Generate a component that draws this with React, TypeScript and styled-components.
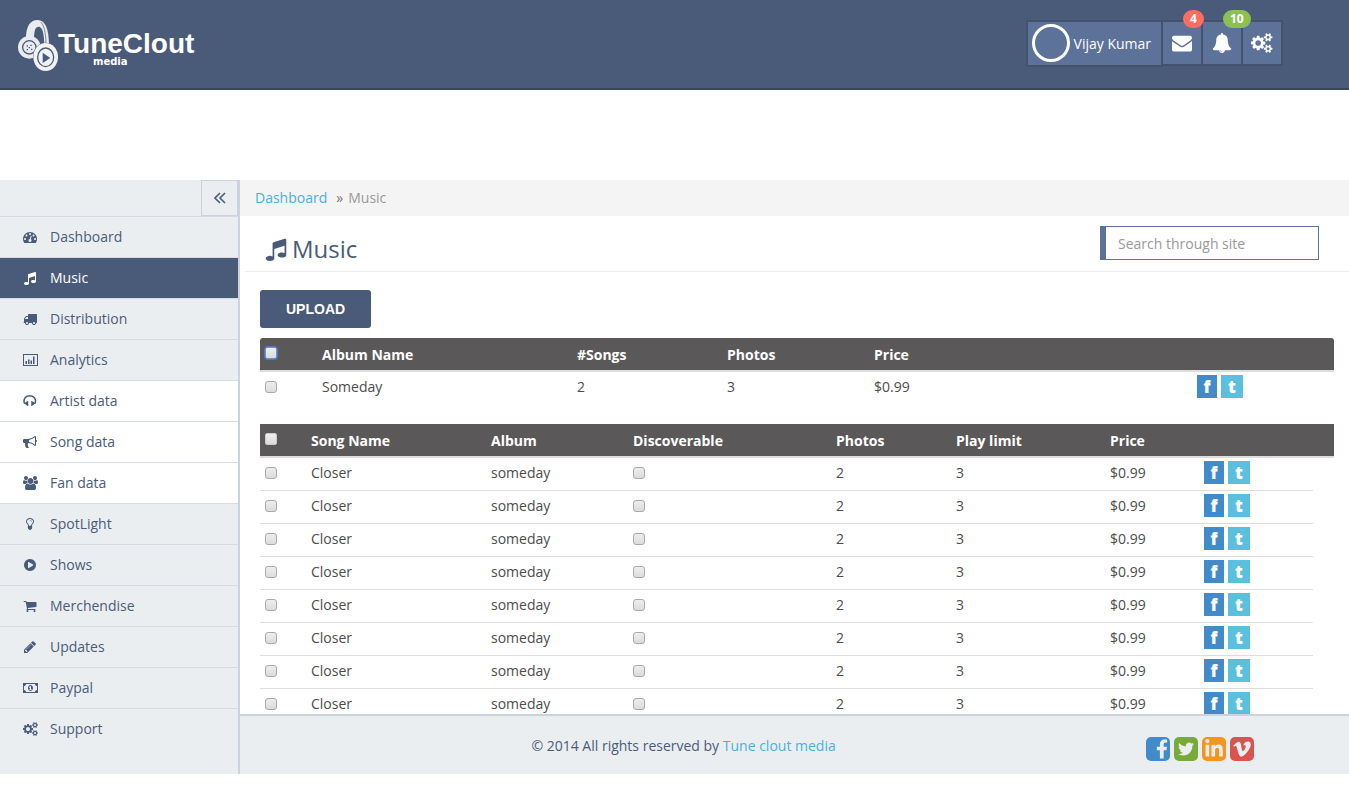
import React from "react";
import styled, { createGlobalStyle, css } from "styled-components";
import { FaFacebookF, FaTwitter, FaLinkedinIn, FaVimeoV } from "react-icons/fa";

const color = {
  navy: "#4a5b79",
  navyDark: "#39465c",
  tile: "#5c7299",
  tileEdge: "#43536e",
  panel: "#ebeef1",
  rule: "#d5dce4",
  edge: "#cbd4de",
  link: "#49b1dc",
  tableHead: "#5b5859",
};

const GlobalStyle = createGlobalStyle`
  *, *::before, *::after { box-sizing: border-box; }
  body {
    margin: 0;
    background: #fff;
    color: #4c4c4c;
    font: 14px/20px "Open Sans", "Noto Sans", sans-serif;
  }
  a { color: inherit; text-decoration: none; }
`;

/* ---------- icons ---------- */

const paths = {
  dashboard:
    "M384 1152q0-53-37.5-90.5t-90.5-37.5-90.5 37.5-37.5 90.5 37.5 90.5 90.5 37.5 90.5-37.5 37.5-90.5zm192-448q0-53-37.5-90.5t-90.5-37.5-90.5 37.5-37.5 90.5 37.5 90.5 90.5 37.5 90.5-37.5 37.5-90.5zm428 481l101-382q6-26-7.5-48.5t-38.5-29.5-48 6.5-30 39.5l-101 382q-60 5-107 43.5t-63 98.5q-20 77 20 146t117 89 146-20 89-117q16-60-6-117t-72-91zm660-33q0-53-37.5-90.5t-90.5-37.5-90.5 37.5-37.5 90.5 37.5 90.5 90.5 37.5 90.5-37.5 37.5-90.5zm-640-640q0-53-37.5-90.5t-90.5-37.5-90.5 37.5-37.5 90.5 37.5 90.5 90.5 37.5 90.5-37.5 37.5-90.5zm448 192q0-53-37.5-90.5t-90.5-37.5-90.5 37.5-37.5 90.5 37.5 90.5 90.5 37.5 90.5-37.5 37.5-90.5zm320 448q0 261-141 483-19 29-54 29h-1402q-35 0-54-29-141-221-141-483 0-182 71-348t191-286 286-191 348-71 348 71 286 191 191 286 71 348z",
  music:
    "M1664 224v1120q0 50-34 89t-86 60.5-103.5 32-96.5 10.5-96.5-10.5-103.5-32-86-60.5-34-89 34-89 86-60.5 103.5-32 96.5-10.5q105 0 192 39v-537l-768 237v709q0 50-34 89t-86 60.5-103.5 32-96.5 10.5-96.5-10.5-103.5-32-86-60.5-34-89 34-89 86-60.5 103.5-32 96.5-10.5q105 0 192 39v-967q0-31 19-56.5t49-35.5l832-256q12-4 28-4 40 0 68 28t28 68z",
  truck:
    "M640 1408q0-52-38-90t-90-38-90 38-38 90 38 90 90 38 90-38 38-90zm-384-512h384v-256h-158q-13 0-22 9l-195 195q-9 9-9 22v30zm1280 512q0-52-38-90t-90-38-90 38-38 90 38 90 90 38 90-38 38-90zm256-1088v1024q0 15-4 26.5t-13.5 18.5-16.5 11.5-23.5 6-22.5 2-25.5 0-22.5-.5q0 106-75 181t-181 75-181-75-75-181h-384q0 106-75 181t-181 75-181-75-75-181h-64q-3 0-22.5.5t-25.5 0-22.5-2-23.5-6-16.5-11.5-13.5-18.5-4-26.5q0-26 19-45t45-19v-320q0-8-.5-35t0-38 2.5-34.5 6.5-37 14-30.5 22.5-30l198-198q19-19 50.5-32t58.5-13h160v-192q0-26 19-45t45-19h1024q26 0 45 19t19 45z",
  chart:
    "M0 128h1920v1536h-1920zM128 256v1280h1664v-1280zM320 1024h192v384h-192zM640 832h192v576h-192zM960 960h192v448h-192zM1280 448h192v960h-192z",
  headphones:
    "M1696 886q0 166-60 314l-20 49-185 33q-22 83-90.5 136.5t-156.5 53.5v32q0 14-9 23t-23 9h-64q-14 0-23-9t-9-23v-576q0-14 9-23t23-9h64q14 0 23 9t9 23v32q71 0 130 35.5t93 95.5l68-12q29-95 29-193 0-148-88-279t-236.5-209-315.5-78-315.5 78-236.5 209-88 279q0 98 29 193l68 12q34-60 93-95.5t130-35.5v-32q0-14 9-23t23-9h64q14 0 23 9t9 23v576q0 14-9 23t-23 9h-64q-14 0-23-9t-9-23v-32q-88 0-156.5-53.5t-90.5-136.5l-185-33-20-49q-60-148-60-314 0-151 67-291t179-242.5 266-163.5 320-61 320 61 266 163.5 179 242.5 67 291z",
  bullhorn:
    "M1664 640q53 0 90.5 37.5t37.5 90.5-37.5 90.5-90.5 37.5v384q0 52-38 90t-90 38q-417-347-812-380-58 19-91 66t-31 100.5 40 92.5q-20 33-23 65.5t6 58 33.5 55 48 50 61.5 50.5q-29 58-111.5 83t-168.5 11.5-132-55.5q-7-23-29.5-87.5t-32-94.5-23-89-15-101 3.5-98.5 22-110.5h-122q-66 0-113-47t-47-113v-192q0-66 47-113t113-47h480q435 0 896-384 52 0 90 38t38 90v384zm-128 604v-954q-394 302-768 343v270q377 42 768 341z",
  users:
    "M593 896q-162 5-265 128h-134q-82 0-138-40.5t-56-118.5q0-353 124-353 6 0 43.5 21t97.5 42.5 119 21.5q67 0 133-23-5 37-5 66 0 139 81 256zm1071 637q0 120-73 189.5t-194 69.5h-874q-121 0-194-69.5t-73-189.5q0-53 3.5-103.5t14-109 26.5-108.5 43-97.5 62-81 85.5-53.5 111.5-20q10 0 43 21.5t73 48 107 48 135 21.5 135-21.5 107-48 73-48 43-21.5q61 0 111.5 20t85.5 53.5 62 81 43 97.5 26.5 108.5 14 109 3.5 103.5zm-1024-1277q0 106-75 181t-181 75-181-75-75-181 75-181 181-75 181 75 75 181zm704 384q0 159-112.5 271.5t-271.5 112.5-271.5-112.5-112.5-271.5 112.5-271.5 271.5-112.5 271.5 112.5 112.5 271.5zm576 225q0 78-56 118.5t-138 40.5h-134q-103-123-265-128 81-117 81-256 0-29-5-66 66 23 133 23 59 0 119-21.5t97.5-42.5 43.5-21q124 0 124 353zm-128-609q0 106-75 181t-181 75-181-75-75-181 75-181 181-75 181 75 75 181z",
  bulb:
    "M1120 576q0 13-9.5 22.5t-22.5 9.5-22.5-9.5-9.5-22.5q0-46-54-71t-106-25q-13 0-22.5-9.5t-9.5-22.5 9.5-22.5 22.5-9.5q50 0 99.5 16t87 54 37.5 90zm160 0q0-72-34.5-134t-90-101.5-123-62-136.5-22.5-136.5 22.5-123 62-90 101.5-34.5 134q0 101 68 180 10 11 30.5 33t30.5 33q128 153 141 298h228q13-145 141-298 10-11 30.5-33t30.5-33q68-79 68-180zm128 0q0 155-103 268-45 49-74.5 87t-59.5 95.5-34 107.5q47 28 47 82 0 37-25 64 25 27 25 64 0 52-45 81 13 23 13 47 0 46-31.5 71t-77.5 25q-20 44-60 70t-87 26-87-26-60-70q-46 0-77.5-25t-31.5-71q0-24 13-47-45-29-45-81 0-37 25-64-25-27-25-64 0-54 47-82-4-50-34-107.5t-59.5-95.5-74.5-87q-103-113-103-268 0-99 44.5-184.5t117-142 164-89 186.5-32.5 186.5 32.5 164 89 117 142 44.5 184.5z",
  play:
    "M896 128q209 0 385.5 103t279.5 279.5 103 385.5-103 385.5-279.5 279.5-385.5 103-385.5-103-279.5-279.5-103-385.5 103-385.5 279.5-279.5 385.5-103zm384 823q32-18 32-55t-32-55l-544-320q-31-19-64-1-32 19-32 56v640q0 37 32 56 16 8 32 8 17 0 32-9z",
  cart:
    "M704 1536q0 52-38 90t-90 38-90-38-38-90 38-90 90-38 90 38 38 90zm896 0q0 52-38 90t-90 38-90-38-38-90 38-90 90-38 90 38 38 90zm128-1088v512q0 24-16.5 42.5t-40.5 21.5l-1044 122q13 60 13 70 0 16-24 64h920q26 0 45 19t19 45-19 45-45 19h-1024q-26 0-45-19t-19-45q0-11 8-31.5t16-36 21.5-40 15.5-29.5l-177-823h-204q-26 0-45-19t-19-45 19-45 45-19h256q16 0 28.5 6.5t19.5 15.5 13 24.5 8 26 5.5 29.5 4.5 26h1201q26 0 45 19t19 45z",
  pencil:
    "M491 1536l91-91-235-235-91 91v107h128v128h107zm523-928q0-22-22-22-10 0-17 7l-542 542q-7 7-7 17 0 22 22 22 10 0 17-7l542-542q7-7 7-17zm-54-192l416 416-832 832h-416v-416zm683 96q0 53-37 90l-166 166-416-416 166-165q36-38 90-38 53 0 91 38l235 234q37 39 37 91z",
  money:
    "M0 256h1920v1280h-1920zM384 384q0 106-75 181t-181 75v512q106 0 181 75t75 181h1152q0-106 75-181t181-75v-512q-106 0-181-75t-75-181zM960 512q150 0 235 120t85 264-85 264-235 120-235-120-85-264 85-264 235-120zM896 672l-144 132 77 80 67-56v228h-112v96h352v-96h-112v-384z",
  cogs:
    "M896 896q0-106-75-181t-181-75-181 75-75 181 75 181 181 75 181-75 75-181zm768 512q0-52-38-90t-90-38-90 38-38 90q0 53 37.5 90.5t90.5 37.5 90.5-37.5 37.5-90.5zm0-1024q0-52-38-90t-90-38-90 38-38 90q0 53 37.5 90.5t90.5 37.5 90.5-37.5 37.5-90.5zm-384 421v185q0 10-7 19.5t-16 10.5l-155 24q-11 35-32 76 34 48 90 115 7 11 7 20 0 12-7 19-23 30-82.5 89.5t-78.5 59.5q-11 0-21-7l-115-90q-37 19-77 31-11 108-23 155-7 24-30 24h-186q-11 0-20-7.5t-10-17.5l-23-153q-34-10-75-31l-118 89q-7 7-20 7-11 0-21-8-144-133-144-160 0-9 7-19 10-14 41-53t47-61q-23-44-35-82l-152-24q-10-1-17-9.5t-7-19.5v-185q0-10 7-19.5t16-10.5l155-24q11-35 32-76-34-48-90-115-7-11-7-20 0-12 7-20 22-30 82-89t79-59q11 0 21 7l115 90q34-18 77-32 11-108 23-154 7-24 30-24h186q11 0 20 7.5t10 17.5l23 153q34 10 75 31l118-89q8-7 20-7 11 0 21 8 144 133 144 160 0 8-7 19-12 16-42 54t-45 60q23 48 34 82l152 23q10 2 17 10.5t7 19.5zm640 533v140q0 16-149 31-12 27-30 52 51 113 51 138 0 4-4 7-122 71-124 71-8 0-46-47t-52-68q-20 2-30 2t-30-2q-14 21-52 68t-46 47q-2 0-124-71-4-3-4-7 0-25 51-138-18-25-30-52-149-15-149-31v-140q0-16 149-31 13-29 30-52-51-113-51-138 0-4 4-7 4-2 35-20t59-34 30-16q8 0 46 46.5t52 67.5q20-2 30-2t30 2q51-71 92-112l6-2q4 0 124 70 4 3 4 7 0 25-51 138 17 23 30 52 149 15 149 31zm0-1024v140q0 16-149 31-12 27-30 52 51 113 51 138 0 4-4 7-122 71-124 71-8 0-46-47t-52-68q-20 2-30 2t-30-2q-14 21-52 68t-46 47q-2 0-124-71-4-3-4-7 0-25 51-138-18-25-30-52-149-15-149-31v-140q0-16 149-31 13-29 30-52-51-113-51-138 0-4 4-7 4-2 35-20t59-34 30-16q8 0 46 46.5t52 67.5q20-2 30-2t30 2q51-71 92-112l6-2q4 0 124 70 4 3 4 7 0 25-51 138 17 23 30 52 149 15 149 31z",
  envelope:
    "M1792 710v794q0 66-47 113t-113 47h-1472q-66 0-113-47t-47-113v-794q44 49 101 87 362 246 497 345 57 42 92.5 65.5t94.5 48 110 24.5h2q51 0 110-24.5t94.5-48 92.5-65.5q170-123 498-345 57-39 100-87zm0-294q0 79-49 151t-122 123q-376 261-468 325-10 7-42.5 30.5t-54 38-52 32.5-57.5 27-50 9h-2q-23 0-50-9t-57.5-27-52-32.5-54-38-42.5-30.5q-91-64-262-182.5t-205-142.5q-62-42-117-115.5t-55-136.5q0-78 41.5-130t118.5-52h1472q65 0 112.5 47t47.5 113z",
  bell:
    "M912 1696q0-16-16-16-59 0-101.5-42.5t-42.5-101.5q0-16-16-16t-16 16q0 73 51.5 124.5t124.5 51.5q16 0 16-16zm816-288q0 52-38 90t-90 38h-448q0 106-75 181t-181 75-181-75-75-181h-448q-52 0-90-38t-38-90q50-42 91-88t85-119.5 74.5-158.5 50-206 19.5-260q0-152 117-282.5t307-158.5q-8-19-8-39 0-40 28-68t68-28 68 28 28 68q0 20-8 39 190 28 307 158.5t117 282.5q0 139 19.5 260t50 206 74.5 158.5 85 119.5 91 88z",
};

type IconName = keyof typeof paths;

const viewWidth: Partial<Record<IconName, number>> = {
  cogs: 1920,
  users: 1920,
  chart: 1920,
  money: 1920,
};

const IconSvg = styled.svg<{ $size: number }>`
  display: block;
  flex: none;
  height: ${(p) => p.$size}px;
  overflow: visible;
  fill: currentColor;
  fill-rule: evenodd;
`;

function Icon({ name, size = 14 }: { name: IconName; size?: number }) {
  return (
    <IconSvg $size={size} viewBox={`0 0 ${viewWidth[name] ?? 1792} 1792`} aria-hidden="true">
      <path d={paths[name]} />
    </IconSvg>
  );
}

function HeadphonesLogo() {
  return (
    <svg width="40" height="52" viewBox="54 60 120 156" aria-hidden="true">
      <path
        d="M78 116C78 76 92 60 113 60c22 0 34 26 34 74l-14 2C132 98 127 80 116 80c-10 0-13 12-14 32z"
        fill="#e9ebee"
      />
      <path d="M122 66c10 8 15 30 16 66" fill="none" stroke={color.navy} strokeWidth="2" />
      <circle cx="88" cy="142" r="34" fill="#e9ebee" />
      <circle cx="88" cy="142" r="20" fill="none" stroke={color.navy} strokeWidth="4" />
      <path
        d="M80 136h4v4h-4zM91 134h4v4h-4zM86 141h4v4h-4zM80 147h4v4h-4zM93 146h4v4h-4z"
        fill={color.navy}
      />
      <ellipse cx="137" cy="171" rx="38" ry="43" fill={color.navy} />
      <ellipse cx="137" cy="171" rx="37" ry="42" fill="#f1f2f4" />
      <ellipse cx="137" cy="172" rx="24" ry="28" fill="none" stroke={color.navy} strokeWidth="4" />
      <path d="M128 158l23 16-23 15z" fill={color.navy} />
    </svg>
  );
}

/* ---------- top bar ---------- */

const TopBar = styled.header`
  display: flex;
  justify-content: space-between;
  align-items: flex-start;
  height: 90px;
  padding: 20px 66px 0 18px;
  background: ${color.navy};
  border-bottom: 2px solid ${color.navyDark};
`;

const Logo = styled.a`
  display: flex;
  color: #fff;
`;

const Wordmark = styled.span`
  display: flex;
  flex-direction: column;
  padding-top: 10px;
  font: bold 28px/28px "Liberation Sans", Arial, sans-serif;
`;

const Tagline = styled.small`
  padding-left: 35px;
  font: bold 10px/8px "DejaVu Sans", sans-serif;
`;

const Tools = styled.nav`
  display: flex;
  align-items: flex-start;
`;

const tile = css`
  display: flex;
  align-items: center;
  border: 2px solid ${color.tileEdge};
  background: ${color.tile};
  color: #fff;
  font: inherit;
  cursor: pointer;
`;

const UserTile = styled.button`
  ${tile}
  gap: 4px;
  height: 47px;
  padding: 0 10px 0 4px;
`;

const Avatar = styled.span`
  width: 38px;
  height: 38px;
  margin-bottom: 2px;
  border: 3px solid #fff;
  border-radius: 50%;
`;

const ToolTile = styled.button`
  ${tile}
  position: relative;
  justify-content: center;
  width: 40px;
  height: 46px;
  padding: 0;
  border-left: 0;
`;

const Badge = styled.span<{ $tone: string }>`
  position: absolute;
  z-index: 1;
  top: -12px;
  left: 20px;
  padding: 0 7px;
  border-radius: 9px;
  background: ${(p) => p.$tone};
  font-size: 12px;
  font-weight: 700;
  line-height: 18px;
`;

/* ---------- side menu ---------- */

const Shell = styled.div`
  display: grid;
  grid-template-columns: 240px minmax(0, 1fr);
  margin-top: 90px;
`;

const Sidebar = styled.aside`
  padding-bottom: 25px;
  border-right: 2px solid ${color.edge};
  background: ${color.panel};
`;

const SidebarTop = styled.div`
  display: flex;
  justify-content: flex-end;
  height: 36px;
`;

const Collapse = styled.button`
  display: grid;
  place-items: center;
  width: 37px;
  padding: 0;
  border: 1px solid ${color.edge};
  background: none;
  color: ${color.navy};
`;

const Menu = styled.ul`
  margin: 0;
  padding: 0;
  list-style: none;
`;

type ItemKind = "plain" | "active" | "sub";

const MenuLink = styled.a<{ $kind: ItemKind }>`
  display: flex;
  align-items: center;
  gap: 11px;
  height: 41px;
  padding-left: 21px;
  border-top: 1px solid ${color.rule};
  color: ${(p) => (p.$kind === "active" ? "#fff" : color.navy)};
  background: ${(p) =>
    p.$kind === "active" ? color.navy : p.$kind === "sub" ? "#fff" : "transparent"};
`;

const IconSlot = styled.span`
  display: flex;
  justify-content: center;
  width: 18px;
`;

const menu: { label: string; icon: IconName; kind?: ItemKind }[] = [
  { label: "Dashboard", icon: "dashboard" },
  { label: "Music", icon: "music", kind: "active" },
  { label: "Distribution", icon: "truck" },
  { label: "Analytics", icon: "chart" },
  { label: "Artist data", icon: "headphones", kind: "sub" },
  { label: "Song data", icon: "bullhorn", kind: "sub" },
  { label: "Fan data", icon: "users", kind: "sub" },
  { label: "SpotLight", icon: "bulb" },
  { label: "Shows", icon: "play" },
  { label: "Merchendise", icon: "cart" },
  { label: "Updates", icon: "pencil" },
  { label: "Paypal", icon: "money" },
  { label: "Support", icon: "cogs" },
];

/* ---------- main column ---------- */

const Main = styled.main`
  display: flex;
  flex-direction: column;
`;

const Breadcrumb = styled.nav`
  display: flex;
  gap: 5px;
  padding: 8px 15px;
  background: #f4f4f4;
  color: #999;

  a {
    margin-right: 4px;
    color: ${color.link};
  }
  span {
    color: #777;
  }
`;

const TitleBar = styled.div`
  display: flex;
  align-items: flex-start;
  justify-content: space-between;
  height: 56px;
  margin-left: 5px;
  padding: 10px 30px 0 19px;
  border-bottom: 1px solid #eee;
`;

const Title = styled.h1`
  display: flex;
  align-items: center;
  gap: 4px;
  margin: 0;
  color: ${color.navy};
  font-size: 24px;
  font-weight: 400;
  line-height: 46px;
`;

const Search = styled.input`
  width: 219px;
  height: 34px;
  padding: 0 12px;
  border: 1px solid ${color.tile};
  border-left-width: 6px;
  background: #fff;
  color: #555;
  font: inherit;

  &::placeholder {
    color: #999;
    opacity: 1;
  }
`;

const Content = styled.section`
  display: flex;
  flex-direction: column;
  align-items: flex-start;
  padding: 18px 15px 0 20px;
`;

const Upload = styled.button`
  height: 38px;
  margin-bottom: 10px;
  padding: 0 26px;
  border: 0;
  border-radius: 3px;
  background: ${color.navy};
  color: #fff;
  font: bold 14px/20px "Liberation Sans", Arial, sans-serif;
`;

const DataTable = styled.table<{ $rounded?: boolean }>`
  width: 100%;
  margin-bottom: ${(p) => (p.$rounded ? 20 : 0)}px;
  border-spacing: 0;
  table-layout: fixed;

  th,
  td {
    height: 33px;
    padding: 0 5px 2px;
    border-top: 1px solid #ddd;
    text-align: left;
    vertical-align: middle;
  }
  tbody tr:first-child td {
    height: 32px;
    border-top: 0;
  }
  th {
    height: 34px;
    padding: 2px 5px 0;
    border-top: 0;
    border-bottom: 2px solid #ddd;
    background: ${color.tableHead};
    color: #fff;
    font-weight: 700;
  }
  th:first-child {
    border-top-left-radius: ${(p) => (p.$rounded ? 3 : 0)}px;
  }
  th:last-child {
    border-top-right-radius: ${(p) => (p.$rounded ? 3 : 0)}px;
  }
`;

const Col = styled.col<{ $w?: number }>`
  width: ${(p) => (p.$w ? `${p.$w}px` : "auto")};
`;

const Check = styled.input.attrs({ type: "checkbox" })<{ $ring?: boolean }>`
  appearance: none;
  display: block;
  width: 12px;
  height: 12px;
  margin: 0;
  border: 1px solid #a9a9a9;
  border-radius: 3px;
  background: linear-gradient(#eee, #dcdcdc);
  outline: ${(p) => (p.$ring ? "1px solid #4a78c4" : "none")};

  th & {
    margin-bottom: 4px;
    border-color: ${(p) => (p.$ring ? "#6f93cf" : "#ccc")};
    border-radius: 2px;
  }
  &:checked {
    background: ${color.tile};
  }
`;

const Share = styled.div`
  display: flex;
  gap: 4px;
  margin-bottom: 2px;
`;

const ShareLink = styled.a<{ $tone: string; $w: number }>`
  width: ${(p) => p.$w}px;
  height: 23px;
  background: ${(p) => p.$tone};
  color: #fff;
  font-size: 17px;
  font-weight: 800;
  line-height: 23px;
  text-align: center;
`;

function ShareLinks() {
  return (
    <Share>
      <ShareLink href="#facebook" $tone="#428bca" $w={20} aria-label="Share on Facebook">
        f
      </ShareLink>
      <ShareLink href="#twitter" $tone="#5bc0de" $w={22} aria-label="Share on Twitter">
        t
      </ShareLink>
    </Share>
  );
}

function AlbumTable() {
  return (
    <DataTable $rounded>
      <colgroup>
        <Col $w={57} />
        <Col />
        <Col $w={150} />
        <Col $w={147} />
        <Col $w={323} />
        <Col $w={142} />
      </colgroup>
      <thead>
        <tr>
          <th>
            <Check $ring aria-label="Select all albums" />
          </th>
          <th>Album Name</th>
          <th>#Songs</th>
          <th>Photos</th>
          <th>Price</th>
          <th />
        </tr>
      </thead>
      <tbody>
        <tr>
          <td>
            <Check aria-label="Select Someday" />
          </td>
          <td>Someday</td>
          <td>2</td>
          <td>3</td>
          <td>$0.99</td>
          <td>
            <ShareLinks />
          </td>
        </tr>
      </tbody>
    </DataTable>
  );
}

const songs = Array.from({ length: 8 }, (_, i) => ({
  id: i + 1,
  name: "Closer",
  album: "someday",
  photos: 2,
  limit: 3,
  price: "$0.99",
}));

function SongTable() {
  return (
    <DataTable>
      <colgroup>
        <Col $w={46} />
        <Col />
        <Col $w={142} />
        <Col $w={203} />
        <Col $w={120} />
        <Col $w={154} />
        <Col $w={94} />
        <Col $w={114} />
        <Col $w={21} />
      </colgroup>
      <thead>
        <tr>
          <th>
            <Check aria-label="Select all songs" />
          </th>
          <th>Song Name</th>
          <th>Album</th>
          <th>Discoverable</th>
          <th>Photos</th>
          <th>Play limit</th>
          <th>Price</th>
          <th colSpan={2} />
        </tr>
      </thead>
      <tbody>
        {songs.map((song) => (
          <tr key={song.id}>
            <td>
              <Check aria-label={`Select song ${song.id}`} />
            </td>
            <td>{song.name}</td>
            <td>{song.album}</td>
            <td>
              <Check aria-label={`Song ${song.id} discoverable`} />
            </td>
            <td>{song.photos}</td>
            <td>{song.limit}</td>
            <td>{song.price}</td>
            <td>
              <ShareLinks />
            </td>
          </tr>
        ))}
      </tbody>
    </DataTable>
  );
}

/* ---------- footer ---------- */

/* The footer rides over the bottom of the last song row. */
const Overlap = styled.div`
  margin-bottom: -9px;
`;

const Footer = styled.footer`
  position: relative;
  display: flex;
  align-items: center;
  height: 60px;
  margin-top: auto;
  padding-top: 2px;
  border-top: 2px solid ${color.edge};
  background: ${color.panel};
  color: ${color.navy};
`;

const Copyright = styled.p`
  flex: 0 0 80%;
  margin: 0;
  text-align: center;

  a {
    color: ${color.link};
  }
`;

const Social = styled.div`
  display: flex;
  gap: 4px;
  padding: 6px 0 0 19px;
`;

const SocialLink = styled.a<{ $tone: string; $corner?: boolean }>`
  display: flex;
  align-items: center;
  justify-content: center;
  width: 24px;
  height: 24px;
  border-radius: 5px;
  background: ${(p) => p.$tone};
  color: ${color.panel};

  ${(p) =>
    p.$corner &&
    css`
      align-items: flex-end;
      justify-content: flex-end;
      padding: 0 2px 2px 0;

      svg {
        width: 12px;
      }
    `}
`;

export default function App() {
  return (
    <>
      <GlobalStyle />
      <TopBar>
        <Logo href="#home">
          <HeadphonesLogo />
          <Wordmark>
            TuneClout
            <Tagline>media</Tagline>
          </Wordmark>
        </Logo>
        <Tools aria-label="Account">
          <UserTile type="button">
            <Avatar />
            Vijay Kumar
          </UserTile>
          <ToolTile type="button" aria-label="Messages">
            <Icon name="envelope" size={20} />
            <Badge $tone="#ff6c60">4</Badge>
          </ToolTile>
          <ToolTile type="button" aria-label="Notifications">
            <Icon name="bell" size={20} />
            <Badge $tone="#8cc152">10</Badge>
          </ToolTile>
          <ToolTile type="button" aria-label="Settings">
            <Icon name="cogs" size={20} />
          </ToolTile>
        </Tools>
      </TopBar>

      <Shell>
        <Sidebar>
          <SidebarTop>
            <Collapse type="button" aria-label="Collapse menu">
              <svg width="12" height="12" viewBox="0 0 12 12" aria-hidden="true">
                <path
                  d="M6 1L1 6l5 5M11 1L6 6l5 5"
                  fill="none"
                  stroke="currentColor"
                  strokeWidth="1.6"
                />
              </svg>
            </Collapse>
          </SidebarTop>
          <Menu>
            {menu.map((item) => (
              <li key={item.label}>
                <MenuLink href={`#${item.icon}`} $kind={item.kind ?? "plain"}>
                  <IconSlot>
                    <Icon name={item.icon} />
                  </IconSlot>
                  {item.label}
                </MenuLink>
              </li>
            ))}
          </Menu>
        </Sidebar>

        <Main>
          <Breadcrumb aria-label="Breadcrumb">
            <a href="#dashboard">Dashboard</a>
            <span>»</span>
            Music
          </Breadcrumb>
          <TitleBar>
            <Title>
              <Icon name="music" size={24} />
              Music
            </Title>
            <Search type="search" placeholder="Search through site" aria-label="Search through site" />
          </TitleBar>
          <Overlap>
            <Content>
              <Upload type="button">UPLOAD</Upload>
              <AlbumTable />
              <SongTable />
            </Content>
          </Overlap>
          <Footer>
            <Copyright>
              © 2014 All rights reserved by <a href="#tuneclout">Tune clout media</a>
            </Copyright>
            <Social>
              <SocialLink href="#facebook" aria-label="Facebook" $tone="#428bca" $corner>
                <FaFacebookF size={20} />
              </SocialLink>
              <SocialLink href="#twitter" aria-label="Twitter" $tone="#76ab3c">
                <FaTwitter size={16} />
              </SocialLink>
              <SocialLink href="#linkedin" aria-label="LinkedIn" $tone="#f7941d">
                <FaLinkedinIn size={20} />
              </SocialLink>
              <SocialLink href="#vimeo" aria-label="Vimeo" $tone="#d9534f">
                <FaVimeoV size={20} />
              </SocialLink>
            </Social>
          </Footer>
        </Main>
      </Shell>
    </>
  );
}
